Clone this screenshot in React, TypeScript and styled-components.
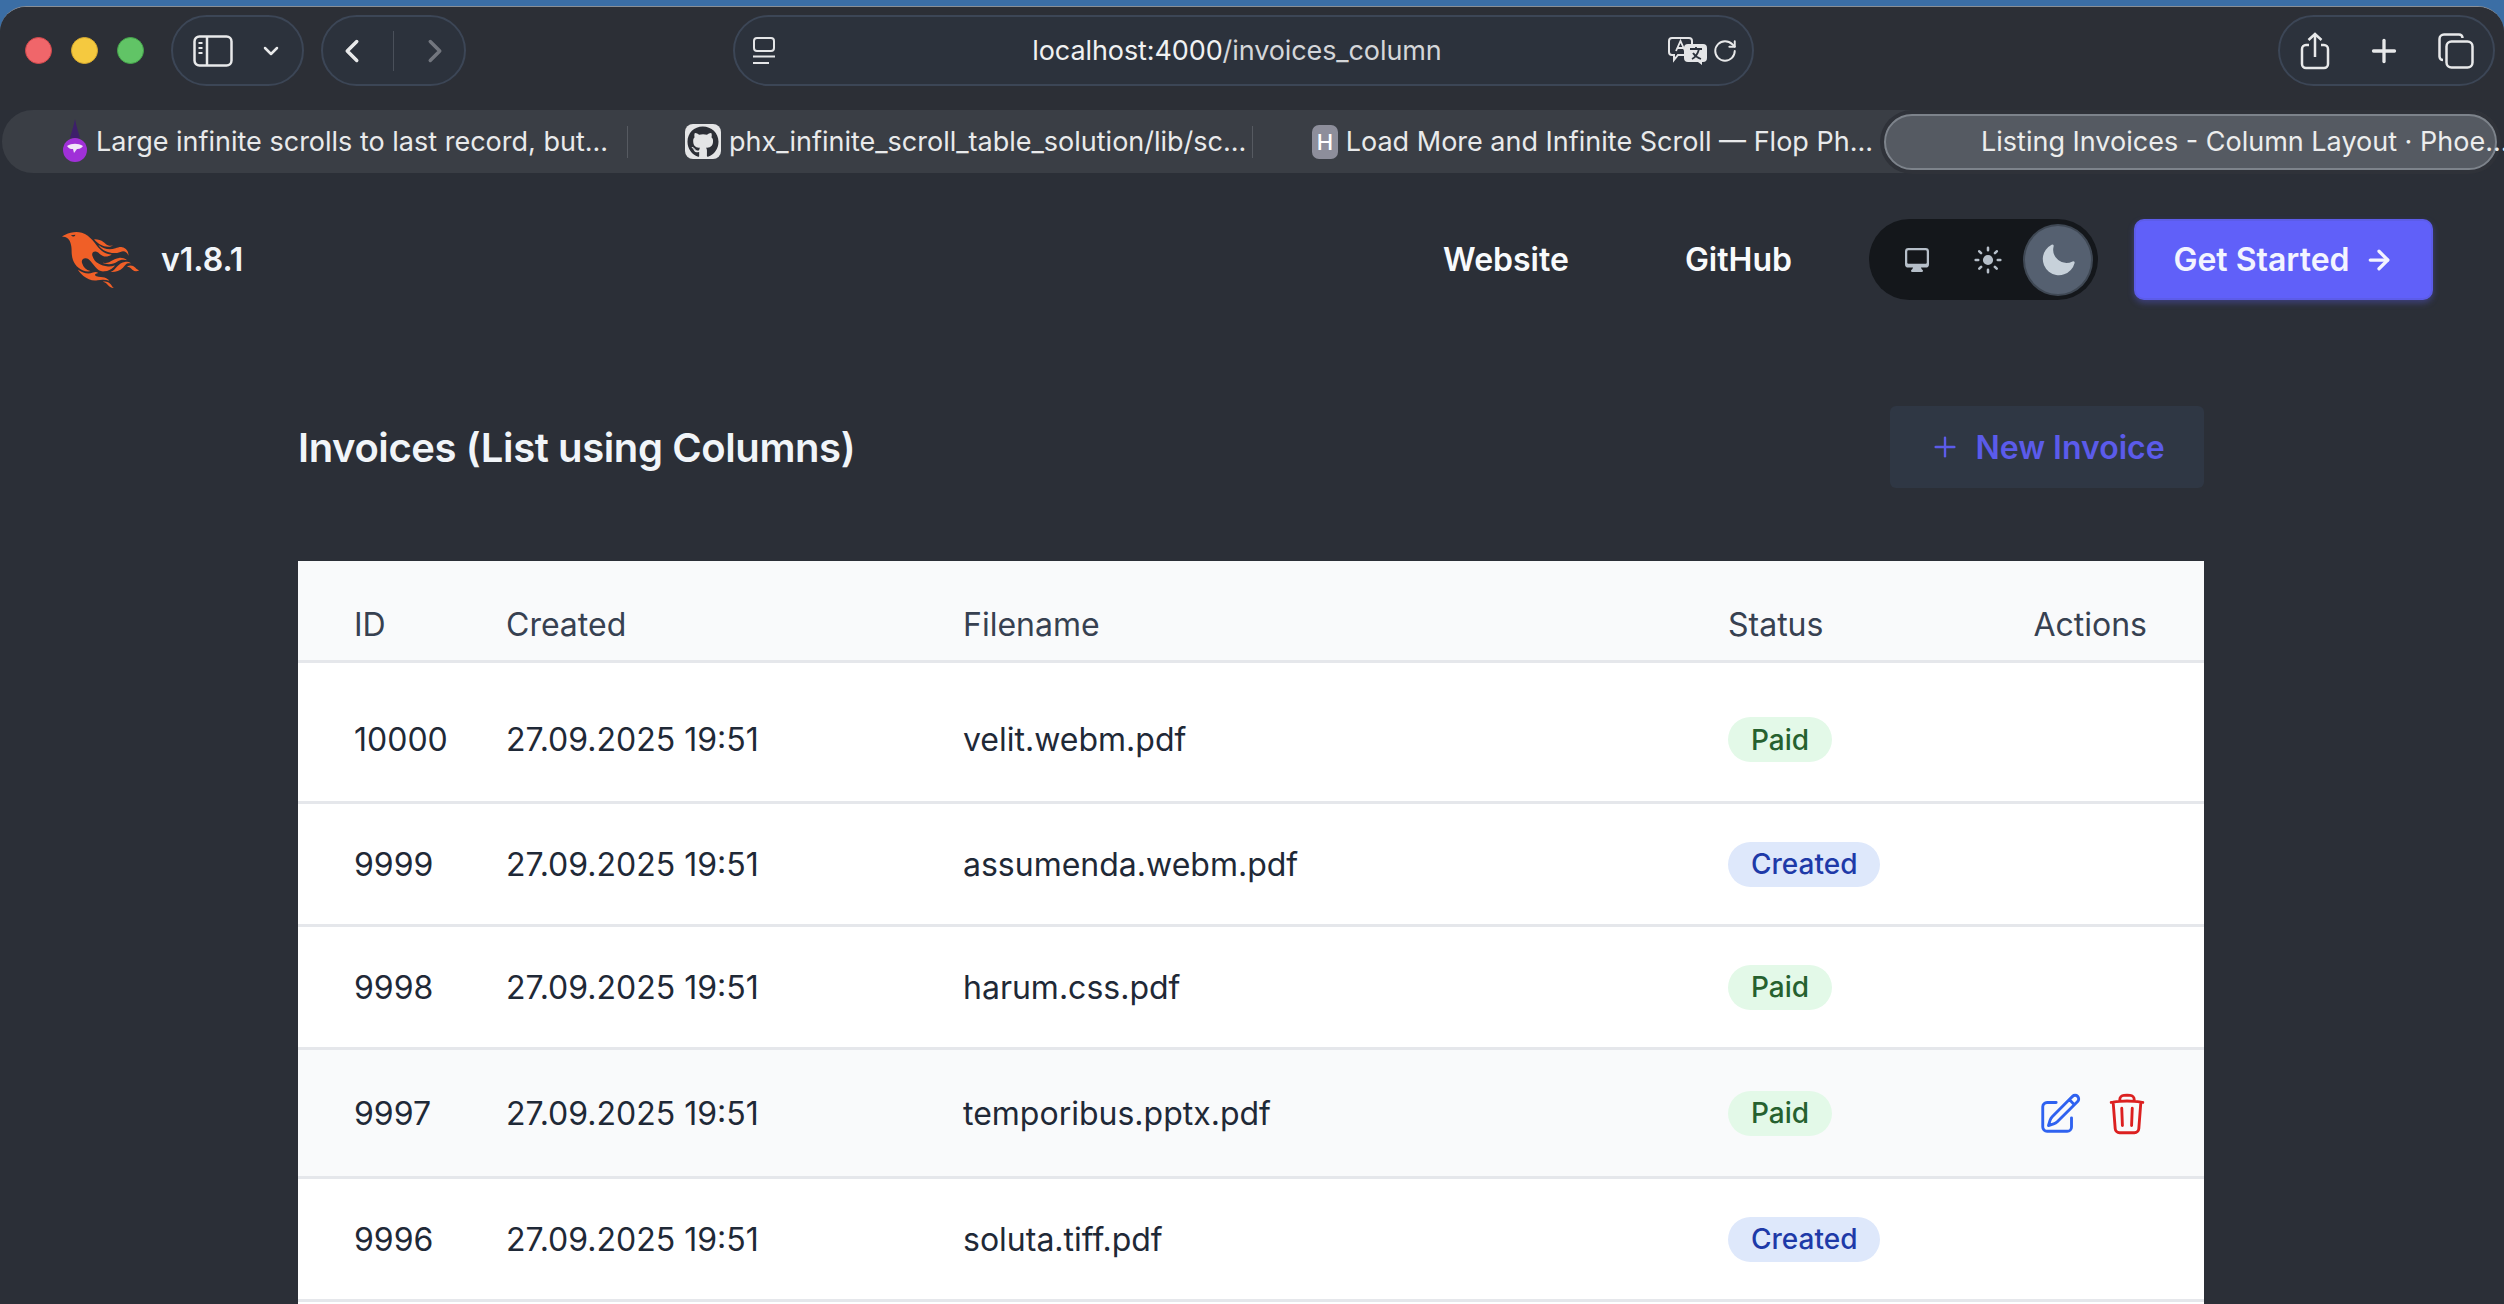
import React from 'react'
import styled, { createGlobalStyle } from 'styled-components'
import { ChevronDown, ChevronLeft, ChevronRight, Plus, RotateCw, ArrowRight } from 'lucide-react'
import {
  HiMiniComputerDesktop,
  HiMiniSun,
  HiMiniMoon,
  HiOutlinePencilSquare,
  HiOutlineTrash,
} from 'react-icons/hi2'
import { FaGithub } from 'react-icons/fa'

const GlobalStyle = createGlobalStyle`
  html, body {
    margin: 0;
    padding: 0;
    height: 1304px;
    overflow: hidden;
    background: #3b6ea5;
    font-family: Inter, "Liberation Sans", sans-serif;
  }
  * { box-sizing: border-box; }
`

const Desktop = styled.div`
  height: 1304px;
  padding-top: 6px;
  background: #3b6ea5;
  overflow: hidden;
`
const Win = styled.div`
  height: 1298px;
  background: #2b2f37;
  border-radius: 26px 26px 0 0;
  border-top: 1px solid #8a8f96;
  overflow: hidden;
`
const Toolbar = styled.div`
  height: 103px;
  display: flex;
  align-items: center;
  padding: 0 9px 16px 25px;
  background: #2c2f36;
`
const Lights = styled.div`
  display: flex;
  gap: 19px;
  margin-right: 27px;
`
const Light = styled.span<{ $color: string; $edge: string }>`
  width: 27px;
  height: 27px;
  border-radius: 50%;
  background: ${(p) => p.$color};
  border: 1px solid ${(p) => p.$edge};
`
const Pill = styled.div<{ $width: number; $gap?: number }>`
  width: ${(p) => p.$width}px;
  height: 71px;
  border: 2px solid #3c4656;
  border-radius: 36px;
  background: #2c323c;
  display: flex;
  align-items: center;
  justify-content: center;
  gap: ${(p) => p.$gap ?? 0}px;
  color: #e8e9ea;
  flex: none;
`
const NavPill = styled(Pill)`
  margin-left: 17px;
`
const UrlPill = styled(Pill)`
  margin-left: 267px;
  justify-content: space-between;
  padding: 0 14px 0 17px;
`
const RightPill = styled(Pill)`
  margin-left: auto;
`
const UrlText = styled.div`
  font-size: 27px;
  color: #f0f1f2;
  letter-spacing: -0.1px;
  margin-left: 30px;
`
const UrlPath = styled.span`
  color: #d4d6d9;
`
const UrlIcons = styled.div`
  display: flex;
  align-items: center;
  gap: 4px;
`
const Divider = styled.span`
  width: 1px;
  height: 40px;
  background: #4a505a;
  margin: 0 22px;
`
const DimIcon = styled.span`
  display: flex;
  color: #72767e;
`
const TabBar = styled.div`
  height: 63px;
  margin: 0 4px 0 2px;
  display: flex;
  align-items: center;
  background: #3a3e45;
  border-radius: 31px;
  padding-right: 0;
  position: relative;
`
const Tab = styled.div<{ $width: number; $pad: number }>`
  width: ${(p) => p.$width}px;
  padding-left: ${(p) => p.$pad}px;
  display: flex;
  align-items: center;
  gap: 8px;
  font-size: 27px;
  color: #e9eaeb;
  white-space: nowrap;
  overflow: hidden;
  flex: none;
`
const TabSep = styled.span`
  width: 1px;
  height: 32px;
  background: #565a61;
  flex: none;
`
const ActiveTab = styled.div`
  flex: none;
  margin-left: auto;
  width: 613px;
  height: 56px;
  margin-right: 3px;
  border-radius: 28px;
  border: 2px solid #7d838b;
  background: #555a62;
  color: #eceded;
  font-size: 27px;
  display: flex;
  align-items: center;
  padding-left: 95px;
  white-space: nowrap;
  box-shadow: 0 0 0 4px #2f3239;
`
const HIcon = styled.span`
  width: 31px;
  height: 34px;
  border-radius: 7px;
  background: #8d8e9b;
  color: #fff;
  font-size: 22px;
  font-weight: 500;
  display: flex;
  align-items: center;
  justify-content: center;
`
const GitIcon = styled.span`
  width: 36px;
  height: 35px;
  border-radius: 8px;
  background: #e4e5e6;
  color: #2c2f36;
  display: flex;
  align-items: center;
  justify-content: center;
`

const Header = styled.header`
  display: flex;
  align-items: center;
  padding: 46px 71px 0 62px;
`
const Brand = styled.div`
  display: flex;
  align-items: center;
  gap: 21px;
  font-size: 32px;
  font-weight: 600;
  color: #f1f5f9;
`
const HeaderLinks = styled.nav`
  margin-left: auto;
  display: flex;
  align-items: center;
  gap: 116px;
  margin-right: 77px;
`
const HeaderLink = styled.a`
  font-size: 32px;
  font-weight: 600;
  color: #f8fafc;
`
const Toggle = styled.div`
  width: 229px;
  height: 81px;
  border-radius: 41px;
  background: #14171b;
  display: flex;
  align-items: center;
  padding: 0 5px 0 13px;
  color: #b6bfc9;
  flex: none;
`
const ToggleItem = styled.span<{ $active?: boolean }>`
  width: ${(p) => (p.$active ? 72 : 73)}px;
  height: ${(p) => (p.$active ? 72 : 73)}px;
  border-radius: 50%;
  display: flex;
  align-items: center;
  justify-content: center;
  background: ${(p) => (p.$active ? '#556070' : 'transparent')};
  border: ${(p) => (p.$active ? '2px solid #3f4854' : 'none')};
  color: ${(p) => (p.$active ? '#c7d1da' : '#b6bfc9')};
`
const StartButton = styled.a`
  margin-left: 36px;
  width: 299px;
  height: 81px;
  border-radius: 10px;
  background: #6060f9;
  border: 2px solid #5c5ce8;
  box-shadow: 0 3px 6px rgba(96, 96, 249, 0.35);
  display: flex;
  align-items: center;
  justify-content: center;
  gap: 14px;
  font-size: 32px;
  font-weight: 600;
  color: #f3f4ff;
  flex: none;
`

const Main = styled.main`
  width: 1906px;
  margin: 106px 0 0 298px;
`
const TitleRow = styled.div`
  display: flex;
  align-items: center;
  justify-content: space-between;
  height: 82px;
  margin-bottom: 73px;
`
const Title = styled.h1`
  margin: 0;
  font-size: 40px;
  font-weight: 600;
  color: #f1f5f9;
  letter-spacing: -0.4px;
`
const NewButton = styled.a`
  width: 314px;
  height: 82px;
  border-radius: 6px;
  background: #2f3744;
  display: flex;
  align-items: center;
  justify-content: center;
  gap: 14px;
  color: #5b5bea;
  font-size: 32px;
  font-weight: 600;
`
const Card = styled.div`
  background: #fff;
`
const Row = styled.div<{ $height: number; $hover?: boolean; $head?: boolean; $top?: number }>`
  height: ${(p) => p.$height}px;
  display: grid;
  grid-template-columns: 208px 457px 765px 1fr auto;
  align-items: center;
  padding: ${(p) => p.$top ?? 0}px 57px 0 56px;
  border-bottom: 3px solid #e5e7eb;
  background: ${(p) => (p.$hover || p.$head ? '#f9fafb' : '#fff')};
  color: ${(p) => (p.$head ? '#374151' : '#1f2937')};
  font-size: 32px;
`
const Cell = styled.div<{ $first?: boolean }>`
  margin-left: ${(p) => (p.$first ? 0 : -56)}px;
`
const Badge = styled.span<{ $status: 'Paid' | 'Created' }>`
  display: inline-flex;
  align-items: center;
  height: 45px;
  padding: 0 23px;
  border-radius: 23px;
  font-size: 28px;
  font-weight: 500;
  background: ${(p) => (p.$status === 'Paid' ? '#e3f9e8' : '#dee8fb')};
  color: ${(p) => (p.$status === 'Paid' ? '#26612f' : '#1e3aa8')};
`
const Actions = styled.div`
  display: flex;
  align-items: center;
  gap: 21px;
  margin: 2px -3px 0 0;
`
const EditIcon = styled(HiOutlinePencilSquare)`
  color: #2f62f0;
`
const TrashIcon = styled(HiOutlineTrash)`
  color: #dc2020;
`

const SidebarIcon = () => (
  <svg width="40" height="32" viewBox="0 0 40 32" fill="none" stroke="#e8e9ea" strokeWidth="2.5">
    <rect x="1.5" y="1.5" width="37" height="29" rx="5" />
    <path d="M14 2v28" />
    <path d="M5.5 8h4M5.5 13h4M5.5 18h4" strokeWidth="2" />
  </svg>
)

const ReaderIcon = () => (
  <svg width="24" height="28" viewBox="0 0 24 28" fill="none" stroke="#e4e5e7" strokeWidth="2">
    <rect x="2" y="1" width="20" height="13" rx="3" />
    <path d="M1 19.5h22M1 26h16" />
  </svg>
)

const TranslateIcon = () => (
  <svg width="40" height="28" viewBox="0 0 40 28" fill="none">
    <path d="M4 1h17a3 3 0 0 1 3 3v11a3 3 0 0 1-3 3H10l-4 5v-5H4a3 3 0 0 1-3-3V4a3 3 0 0 1 3-3z" stroke="#e4e5e7" strokeWidth="2" />
    <path d="M8 14l4.500-10 4.500 10M9.500 11h6" stroke="#e4e5e7" strokeWidth="1.800" />
    <path d="M20 7h15a4 4 0 0 1 4 4v10a4 4 0 0 1-4 4h-1v3l-4-3h-10a4 4 0 0 1-4-4V11a4 4 0 0 1 4-4z" fill="#e4e5e7" />
    <path d="M22 12h12M28 10v2M24 22c4-2 6-6 7-10M25 16c2 3 5 5 8 6" stroke="#2c323c" strokeWidth="1.800" />
  </svg>
)

const ShareIcon = () => (
  <svg width="30" height="38" viewBox="0 0 30 38" fill="none" stroke="#e8e9ea" strokeWidth="2.5">
    <path d="M9 13H6a4 4 0 0 0-4 4v15a4 4 0 0 0 4 4h18a4 4 0 0 0 4-4V17a4 4 0 0 0-4-4h-3" />
    <path d="M15 25V2M8.500 8L15 2l6.500 6" />
  </svg>
)

const TabsIcon = () => (
  <svg width="36" height="36" viewBox="0 0 36 36" fill="none" stroke="#e8e9ea" strokeWidth="2.5">
    <path d="M5 27c-2 0-3.500-1.500-3.500-3.500V6C1.500 3.500 3.500 1.500 6 1.500h15c2 0 3.500 1.500 3.500 3.500" />
    <rect x="8.500" y="8.500" width="26" height="26" rx="5" />
  </svg>
)

const DropIcon = () => (
  <svg width="26" height="46" viewBox="0 0 26 46">
    <path d="M13 0c2 10 4 15 5 19H8c1-4 3-9 5-19z" fill="#3d1f6b" />
    <circle cx="13" cy="31" r="12" fill="#a030d8" />
    <path d="M5 27c5-3 11-3 16 0-2 3-5 3-6 3l-3 4-1-4c-2 0-4 0-6-3z" fill="#f1e6f8" />
  </svg>
)

const PhoenixLogo = () => (
  <svg width="78" height="56" viewBox="0 0 71 48" preserveAspectRatio="none" fill="#f05f27">
    <path d="m26.371 33.477-.552-.1c-3.92-.729-6.397-3.1-7.57-6.829-.733-2.324.597-4.035 3.035-4.148 1.995-.092 3.362 1.055 4.57 2.39 1.557 1.72 2.984 3.558 4.514 5.305 2.202 2.515 4.797 4.134 8.347 3.634 3.183-.448 5.958-1.725 8.371-3.828.363-.316.761-.592 1.144-.886l-.241-.284c-2.027.63-4.093.841-6.205.735-3.195-.16-6.24-.828-8.964-2.582-2.486-1.601-4.319-3.746-5.19-6.611-.704-2.315.736-3.934 3.135-3.6.948.133 1.746.56 2.463 1.165.583.493 1.143 1.015 1.738 1.493 2.8 2.25 6.712 2.375 10.265-.068-5.842-.026-9.817-3.24-13.308-7.313-1.366-1.594-2.7-3.216-4.095-4.785-2.698-3.036-5.692-5.71-9.79-6.623C12.8-.623 7.745.14 2.893 2.361 1.926 2.804.997 3.319 0 4.149c.494 0 .763.006 1.032 0 2.446-.064 4.28 1.023 5.602 3.024.962 1.457 1.415 3.104 1.761 4.798.513 2.515.247 5.078.544 7.605.761 6.494 4.08 11.026 10.26 13.346 2.267.852 4.591 1.135 7.172.555ZM10.751 3.852c-.976.246-1.756-.148-2.56-.962 1.377-.343 2.592-.476 3.897-.528-.107.848-.607 1.306-1.336 1.49Zm32.002 37.924c-.085-.626-.62-.901-1.04-1.228-1.857-1.446-4.03-1.958-6.333-2-1.375-.026-2.735-.128-4.031-.61-.595-.22-1.26-.505-1.244-1.272.015-.78.693-1 1.31-1.184.505-.15 1.026-.247 1.6-.382-1.46-.936-2.886-1.065-4.787-.3-2.993 1.202-5.943 1.06-8.926-.017-1.684-.608-3.179-1.563-4.735-2.408l-.077.057c1.29 2.115 3.034 3.817 5.004 5.271 3.793 2.8 7.936 4.471 12.784 3.73A66.714 66.714 0 0 1 37 40.877c1.98-.16 3.866.398 5.753.899Zm-9.14-30.345c-.105-.076-.206-.266-.42-.069 1.745 2.36 3.985 4.098 6.683 5.193 4.354 1.767 8.773 2.07 13.293.51 3.51-1.21 6.033-.028 7.343 3.38.19-3.955-2.137-6.837-5.843-7.401-2.084-.318-4.01.373-5.962.94-5.434 1.575-10.485.798-15.094-2.553Zm27.085 15.425c.708.059 1.416.123 2.124.185-1.6-1.405-3.55-1.517-5.523-1.404-3.003.17-5.167 1.903-7.14 3.972-1.739 1.824-3.31 3.87-5.903 4.604.043.078.054.117.066.117.35.005.699.021 1.047.005 3.768-.17 7.317-.965 10.14-3.7.89-.86 1.685-1.817 2.544-2.71.716-.746 1.584-1.159 2.645-1.07Zm-8.753-4.67c-2.812.246-5.254 1.409-7.548 2.943-1.766 1.18-3.654 1.738-5.776 1.37-.374-.066-.75-.114-1.124-.17l-.013.156c.135.07.265.151.405.207.354.14.702.308 1.07.395 4.083.971 7.992.474 11.516-1.803 2.221-1.435 4.521-1.707 7.013-1.336.252.038.503.083.756.107.234.022.479.255.795.003-2.179-1.574-4.526-2.096-7.094-1.872Zm-10.049-9.544c1.475.051 2.943-.142 4.486-1.059-.452.04-.643.042-.827.076-2.126.424-4.033-.04-5.733-1.383-.623-.493-1.257-.974-1.889-1.457-2.503-1.914-5.374-2.555-8.514-2.5.05.154.054.26.108.315 3.417 3.455 7.371 5.836 12.369 6.008Zm24.727 17.731c-2.114-2.097-4.952-2.367-7.578-.537 1.738.078 3.043.632 4.101 1.728.374.388.763.768 1.182 1.106 1.6 1.29 4.311 1.352 5.896.155-1.861-.726-1.861-.726-3.601-2.452Zm-21.058 16.06c-1.858-3.46-4.981-4.24-8.59-4.008a9.667 9.667 0 0 1 2.977 1.39c.84.586 1.547 1.311 2.243 2.055 1.38 1.473 3.534 2.376 4.962 2.07-.656-.412-1.238-.848-1.592-1.507Z" />
  </svg>
)

type Invoice = {
  id: number
  file: string
  status: 'Paid' | 'Created'
  height: number
  top?: number
  hover?: boolean
}

const invoices: Invoice[] = [
  { id: 10000, file: 'velit.webm.pdf', status: 'Paid', height: 141, top: 15 },
  { id: 9999, file: 'assumenda.webm.pdf', status: 'Created', height: 123 },
  { id: 9998, file: 'harum.css.pdf', status: 'Paid', height: 123 },
  { id: 9997, file: 'temporibus.pptx.pdf', status: 'Paid', height: 129, hover: true },
  { id: 9996, file: 'soluta.tiff.pdf', status: 'Created', height: 123 },
]

const App = () => {
  return (
    <Desktop>
      <GlobalStyle />
      <Win>
        <Toolbar>
          <Lights>
            <Light $color="#f0666a" $edge="#d3484c" />
            <Light $color="#f5c93f" $edge="#d8ab2e" />
            <Light $color="#61c466" $edge="#45a54b" />
          </Lights>
          <Pill $width={133} $gap={26}>
            <SidebarIcon />
            <ChevronDown size={24} strokeWidth={2.5} />
          </Pill>
          <NavPill $width={145}>
            <ChevronLeft size={38} strokeWidth={2.2} />
            <Divider />
            <DimIcon>
              <ChevronRight size={38} strokeWidth={2.2} />
            </DimIcon>
          </NavPill>
          <UrlPill $width={1021}>
            <ReaderIcon />
            <UrlText>
              localhost:4000<UrlPath>/invoices_column</UrlPath>
            </UrlText>
            <UrlIcons>
              <TranslateIcon />
              <RotateCw size={26} strokeWidth={1.8} />
            </UrlIcons>
          </UrlPill>
          <RightPill $width={217} $gap={36}>
            <ShareIcon />
            <Plus size={36} strokeWidth={2.2} />
            <TabsIcon />
          </RightPill>
        </Toolbar>
        <TabBar>
          <Tab $width={625} $pad={60}>
            <DropIcon />
            Large infinite scrolls to last record, but...
          </Tab>
          <TabSep />
          <Tab $width={624} $pad={57}>
            <GitIcon>
              <FaGithub size={32} />
            </GitIcon>
            phx_infinite_scroll_table_solution/lib/sc...
          </Tab>
          <TabSep />
          <Tab $width={620} $pad={59}>
            <HIcon>H</HIcon>
            Load More and Infinite Scroll — Flop Ph...
          </Tab>
          <ActiveTab>Listing Invoices - Column Layout · Phoe...</ActiveTab>
        </TabBar>
        <Header>
          <Brand>
            <PhoenixLogo />
            v1.8.1
          </Brand>
          <HeaderLinks>
            <HeaderLink>Website</HeaderLink>
            <HeaderLink>GitHub</HeaderLink>
          </HeaderLinks>
          <Toggle>
            <ToggleItem>
              <HiMiniComputerDesktop size={30} />
            </ToggleItem>
            <ToggleItem>
              <HiMiniSun size={34} />
            </ToggleItem>
            <ToggleItem $active>
              <HiMiniMoon size={38} />
            </ToggleItem>
          </Toggle>
          <StartButton>
            Get Started
            <ArrowRight size={30} strokeWidth={2.6} />
          </StartButton>
        </Header>
        <Main>
          <TitleRow>
            <Title>Invoices (List using Columns)</Title>
            <NewButton>
              <Plus size={32} strokeWidth={1.8} />
              New Invoice
            </NewButton>
          </TitleRow>
          <Card>
            <Row $height={102} $head $top={28}>
              <Cell $first>ID</Cell>
              <Cell>Created</Cell>
              <Cell>Filename</Cell>
              <Cell>Status</Cell>
              <div>Actions</div>
            </Row>
            {invoices.map((inv) => (
              <Row key={inv.id} $height={inv.height} $hover={inv.hover} $top={inv.top}>
                <Cell $first>{inv.id}</Cell>
                <Cell>27.09.2025 19:51</Cell>
                <Cell>{inv.file}</Cell>
                <Cell>
                  <Badge $status={inv.status}>{inv.status}</Badge>
                </Cell>
                <div>
                  {inv.hover && (
                    <Actions>
                      <EditIcon size={46} />
                      <TrashIcon size={46} />
                    </Actions>
                  )}
                </div>
              </Row>
            ))}
            <Row $height={60} />
          </Card>
        </Main>
      </Win>
    </Desktop>
  )
}

export default App
